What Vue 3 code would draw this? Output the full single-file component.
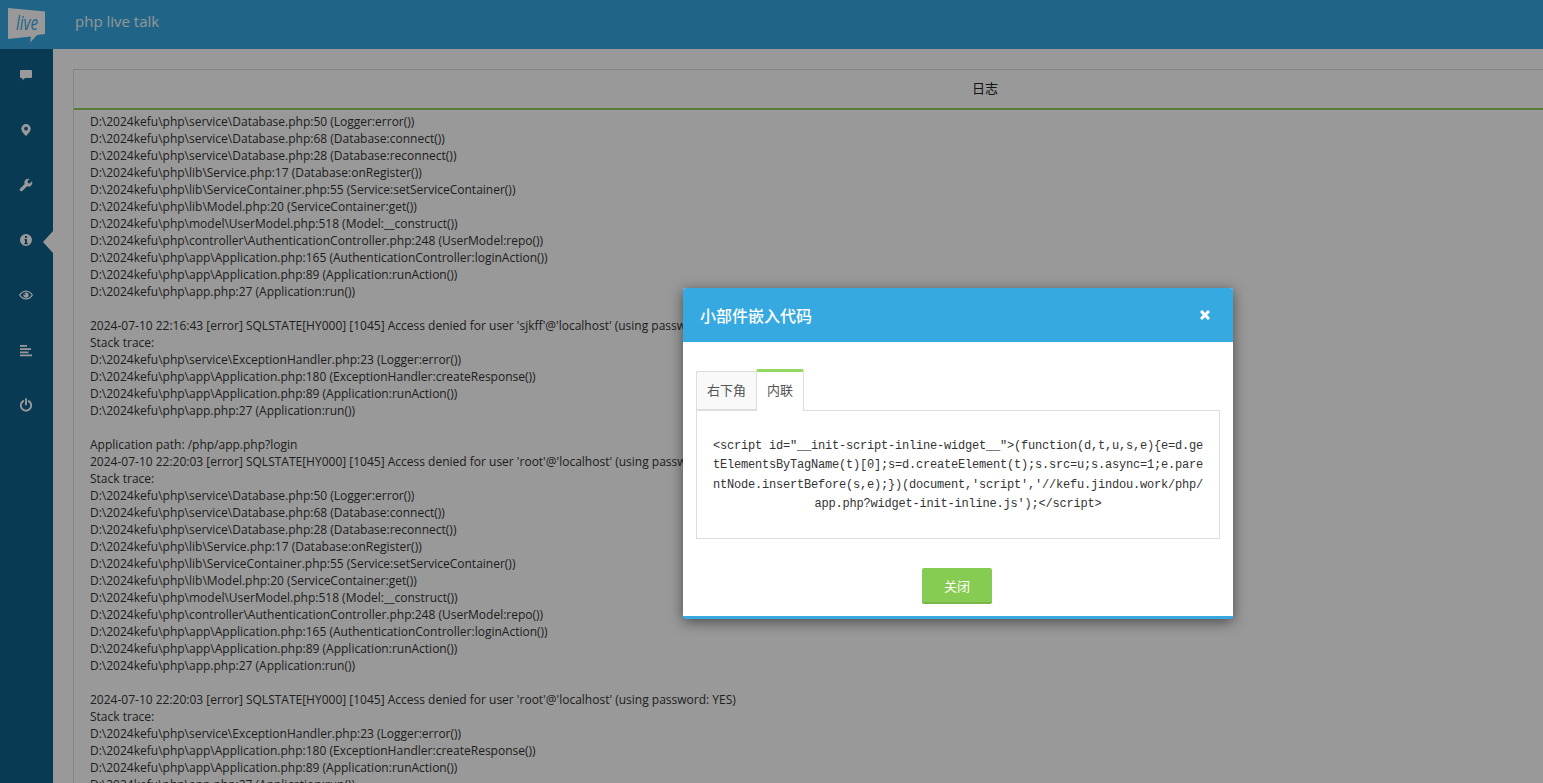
<script setup>
const trace = [
  'D:\\2024kefu\\php\\service\\Database.php:50 (Logger:error())',
  'D:\\2024kefu\\php\\service\\Database.php:68 (Database:connect())',
  'D:\\2024kefu\\php\\service\\Database.php:28 (Database:reconnect())',
  'D:\\2024kefu\\php\\lib\\Service.php:17 (Database:onRegister())',
  'D:\\2024kefu\\php\\lib\\ServiceContainer.php:55 (Service:setServiceContainer())',
  'D:\\2024kefu\\php\\lib\\Model.php:20 (ServiceContainer:get())',
  'D:\\2024kefu\\php\\model\\UserModel.php:518 (Model:__construct())',
  'D:\\2024kefu\\php\\controller\\AuthenticationController.php:248 (UserModel:repo())',
  'D:\\2024kefu\\php\\app\\Application.php:165 (AuthenticationController:loginAction())',
  'D:\\2024kefu\\php\\app\\Application.php:89 (Application:runAction())',
  'D:\\2024kefu\\php\\app.php:27 (Application:run())'
]
const shortTrace = [
  'D:\\2024kefu\\php\\service\\ExceptionHandler.php:23 (Logger:error())',
  'D:\\2024kefu\\php\\app\\Application.php:180 (ExceptionHandler:createResponse())',
  'D:\\2024kefu\\php\\app\\Application.php:89 (Application:runAction())',
  'D:\\2024kefu\\php\\app.php:27 (Application:run())'
]
const denied = (time, user) =>
  `2024-07-10 ${time} [error] SQLSTATE[HY000] [1045] Access denied for user '${user}'@'localhost' (using password: YES)`
const lines = [
  ...trace,
  '',
  denied('22:16:43', 'sjkff'),
  'Stack trace:',
  ...shortTrace,
  '',
  'Application path: /php/app.php?login',
  denied('22:20:03', 'root'),
  'Stack trace:',
  ...trace,
  '',
  denied('22:20:03', 'root'),
  'Stack trace:',
  ...shortTrace
]
const icons = [
  { name: 'comment', d: 'M2 2h10a1 1 0 0 1 1 1v6a1 1 0 0 1-1 1H6l-2.6 2.6V10H2a1 1 0 0 1-1-1V3a1 1 0 0 1 1-1z' },
  { name: 'marker', d: 'M7 1a4.7 4.7 0 0 0-4.7 4.7C2.3 8.6 5.6 11.5 7 13c1.4-1.5 4.7-4.4 4.7-7.3A4.7 4.7 0 0 0 7 1zm0 2.8a1.9 1.9 0 1 1 0 3.8 1.9 1.9 0 0 1 0-3.8z' },
  { name: 'wrench', d: 'M13 3.2 10.8 5.4 8.9 5 8.5 3.1 10.7 1A3.8 3.8 0 0 0 5.7 5.9L1.2 10.4a1.5 1.5 0 0 0 2.3 2.3L8 8.2a3.8 3.8 0 0 0 5-5z' },
  { name: 'info', active: true, d: 'M7 1a6 6 0 1 0 0 12A6 6 0 0 0 7 1zM6 3h2v2H6zM5.5 6H8v4h.8v1.2H5.3V10H6V7.2h-.5z' },
  { name: 'eye', d: 'M7 2.400C3.800 2.400 1.300 4.600 0 7c1.300 2.400 3.800 4.600 7 4.600s5.700-2.200 7-4.600c-1.300-2.400-3.800-4.600-7-4.600zM1.400 7c1-1.800 3-3.300 5.600-3.300s4.600 1.500 5.600 3.300c-1 1.800-3 3.300-5.600 3.300S2.400 8.800 1.400 7zM7 4.400a2.600 2.600 0 1 0 0 5.200 2.600 2.600 0 0 0 0-5.200zM5.600 5.500a.8.8 0 1 1 0 1.600.8.8 0 0 1 0-1.600z' },
  { name: 'align', d: 'M1 2h7v1.800H1zM1 5.200h11V7H1zM1 8.400h8.500v1.800H1zM1 11.500h12v1.800H1z' },
  { name: 'power', stroke: true, d: 'M4.200 3.100a5.200 5.200 0 1 0 5.600 0M7 1v5.500' }
]
const code = `<script id="__init-script-inline-widget__">(function(d,t,u,s,e){e=d.getElementsByTagName(t)[0];s=d.createElement(t);s.src=u;s.async=1;e.parentNode.insertBefore(s,e);})(document,'script','//kefu.jindou.work/php/app.php?widget-init-inline.js');<\/script>`
</script>

<template>
  <div class="page">
    <header class="topbar">
      <svg class="logo" width="50" height="42" viewBox="0 0 50 42" aria-label="live">
        <path class="logo-bubble" d="M8 5 45 8.500V31L37 32 30 39.500 31 33.500 8 36z" />
        <text class="logo-text" x="16" y="27" textLength="22" lengthAdjust="spacingAndGlyphs">live</text>
      </svg>
      <span class="brand">php live talk</span>
    </header>
    <div class="main">
      <nav class="sidebar">
        <div v-for="icon in icons" :key="icon.name" class="nav-item">
          <svg width="14" height="14" viewBox="0 0 14 14" class="nav-icon">
            <path :d="icon.d" :class="icon.stroke ? 'stroked' : 'filled'" />
          </svg>
          <span v-if="icon.active" class="caret"></span>
        </div>
      </nav>
      <main class="content">
        <section class="panel">
          <h2 class="panel-title">日志</h2>
          <div class="log">
            <div v-for="(line, i) in lines" :key="i" class="log-line">{{ line }}</div>
          </div>
        </section>
      </main>
    </div>

    <div class="overlay"></div>

    <div class="modal">
      <div class="modal-head">
        <span class="modal-title">小部件嵌入代码</span>
        <svg class="close" width="10" height="10" viewBox="0 0 10 10">
          <path d="M1 1 9 9M9 1 1 9" />
        </svg>
      </div>
      <div class="modal-body">
        <div class="tabs">
          <div class="tab">右下角</div>
          <div class="tab active">内联</div>
        </div>
        <div class="code-box">{{ code }}</div>
        <div class="actions">
          <button class="btn" type="button">关闭</button>
        </div>
      </div>
    </div>
  </div>
</template>

<style>
html, body { margin: 0; height: 100%; overflow: hidden; background: #fff; }
</style>

<style scoped>
.page {
  position: relative;
  width: 1543px;
  height: 783px;
  overflow: hidden;
  font-family: "Open Sans", "Noto Sans CJK SC", sans-serif;
  font-size: 12px;
  color: #333;
  display: flex;
  flex-direction: column;
}
.topbar {
  height: 49px;
  flex: none;
  background: #36a9e3;
  display: flex;
  align-items: center;
}
.logo { flex: none; margin-right: 25px; margin-top: -1px; }
.logo-bubble { fill: #fff; }
.logo-text {
  font-family: "Open Sans", sans-serif;
  font-style: italic;
  font-size: 20px;
  fill: #36a9e3;
}
.brand {
  font-size: 15px;
  color: #fff;
  opacity: .95;
  padding-bottom: 8px;
}
.main { flex: 1; display: flex; min-height: 0; }
.sidebar { width: 53px; flex: none; background: #0f618c; }
.nav-item {
  position: relative;
  height: 55px;
  box-sizing: border-box;
  padding: 19px 1px 0 0;
  display: flex;
  justify-content: center;
}
.nav-icon { display: block; }
.filled { fill: #fff; fill-rule: evenodd; }
.stroked { fill: none; stroke: #fff; stroke-width: 1.900; stroke-linecap: round; }
.caret {
  position: absolute;
  right: 0;
  top: 17px;
  width: 0;
  height: 0;
  border-top: 11px solid transparent;
  border-bottom: 11px solid transparent;
  border-right: 10px solid #fff;
}
.content { flex: 1; min-width: 0; padding: 20px 0 0 20px; }
.panel {
  width: 1824px;
  box-sizing: border-box;
  border: 1px solid #ddd;
  border-bottom: 0;
}
.panel-title {
  margin: 0;
  height: 40px;
  box-sizing: border-box;
  padding-bottom: 3px;
  border-bottom: 2px solid #8fd05c;
  display: flex;
  align-items: center;
  justify-content: center;
  font-size: 13px;
  font-weight: 400;
  color: #222;
}
.log { padding: 3px 16px 0; line-height: 17px; }
.log-line { height: 17px; white-space: nowrap; }
.overlay {
  position: absolute;
  inset: 0;
  background: rgba(0, 0, 0, .4);
}
.modal {
  position: absolute;
  left: 683px;
  top: 288px;
  width: 550px;
  background: #fff;
  border-bottom: 3px solid #36a9e1;
  border-radius: 3px;
  box-shadow: 0 3px 14px rgba(0, 0, 0, .5);
}
.modal-head {
  height: 54px;
  background: #36a9e1;
  border-radius: 3px 3px 0 0;
  display: flex;
  align-items: center;
  justify-content: space-between;
  padding: 0 23px 0 17px;
}
.modal-title { font-size: 16px; font-weight: 500; color: #fff; }
.close { margin-top: -1px; }
.close path { fill: none; stroke: #fff; stroke-width: 3; }
.modal-body { padding: 27px 13px 12px; }
.tabs { display: flex; margin-bottom: -1px; position: relative; }
.tab {
  width: 60px;
  height: 39px;
  margin-top: 2px;
  padding-bottom: 2px;
  box-sizing: border-box;
  display: flex;
  align-items: center;
  justify-content: center;
  background: #f9f9f9;
  border: 1px solid #ddd;
  border-right: 0;
  border-radius: 2px 0 0 0;
  font-size: 13px;
  color: #555;
}
.tab.active {
  width: 48px;
  height: 42px;
  margin-top: 0;
  padding-bottom: 4px;
  background: #fff;
  border-top: 3px solid #93d764;
  border-right: 1px solid #ddd;
  border-bottom: 0;
  border-radius: 2px 2px 0 0;
}
.code-box {
  box-sizing: border-box;
  width: 524px;
  border: 1px solid #ddd;
  padding: 25.600px 15px 23.400px;
  font-family: "Liberation Mono", monospace;
  font-size: 12px;
  letter-spacing: -.2px;
  line-height: 19.600px;
  color: #333;
  text-align: center;
  word-break: break-all;
}
.actions { display: flex; justify-content: center; margin-top: 29px; padding-right: 2px; }
.btn {
  width: 70px;
  height: 36px;
  padding: 0;
  border: 0;
  border-bottom: 2px solid #78b747;
  border-radius: 2px;
  background: #87cc52;
  color: #fff;
  font-family: "Open Sans", "Noto Sans CJK SC", sans-serif;
  font-size: 13px;
}
</style>
